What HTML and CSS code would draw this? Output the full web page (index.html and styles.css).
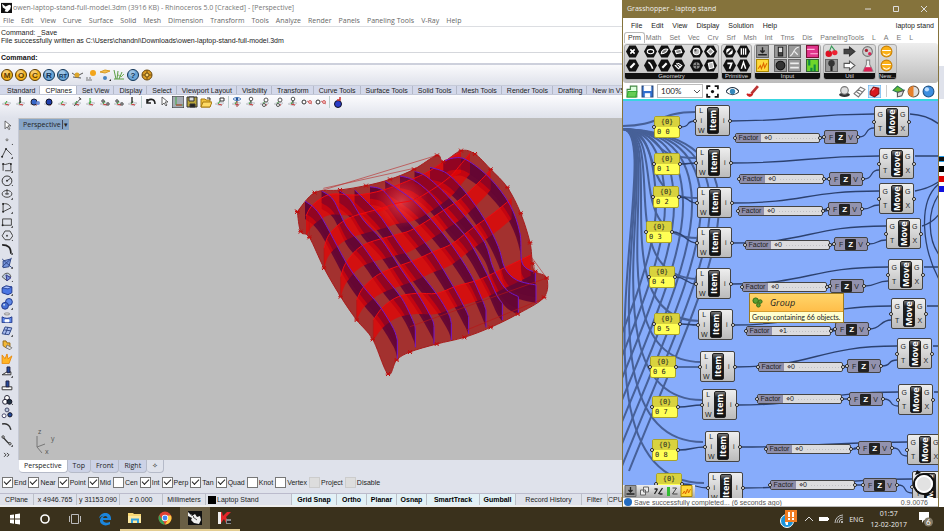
FILE: index.html
```html
<!DOCTYPE html>
<html lang="en">
<head>
<meta charset="utf-8">
<title>Rhinoceros and Grasshopper</title>
<link rel="stylesheet" href="styles.css">
</head>
<body>
<main class="desktop">
  <section class="rhino" aria-label="Rhinoceros">
    <header class="titlebar">
      <svg class="app-icon" viewBox="0 0 12 12"><path d="M0 1h12v11H0z" fill="#111"/><path d="M1 2l4 3 4-2 2 1-1 4-3 3-3-1 1-2-3-2z" fill="#fff"/></svg>
      <h1>owen-laptop-stand-full-model.3dm (3916 KB) - Rhinoceros 5.0 [Cracked] - [Perspective]</h1>
    </header>
    <nav class="menu">
      <a href="#">File</a><a href="#">Edit</a><a href="#">View</a><a href="#">Curve</a><a href="#">Surface</a><a href="#">Solid</a><a href="#">Mesh</a><a href="#">Dimension</a><a href="#">Transform</a><a href="#">Tools</a><a href="#">Analyze</a><a href="#">Render</a><a href="#">Panels</a><a href="#">Paneling Tools</a><a href="#">V-Ray</a><a href="#">Help</a>
    </nav>
    <div class="history"><p>Command: _Save</p><p>File successfully written as C:\Users\chandni\Downloads\owen-laptop-stand-full-model.3dm</p></div>
    <div class="prompt"><label for="cmd">Command:</label><input id="cmd" type="text"></div>
    <div class="toolbar vray" data-icons="gold-M gold-O gold-C blue-R blue-RT teapot sun lamp grass blue-? gear"></div>
    <nav class="tabs">
      <a href="#">Standard</a><a href="#" class="on">CPlanes</a><a href="#">Set View</a><a href="#">Display</a><a href="#">Select</a><a href="#">Viewport Layout</a><a href="#">Visibility</a><a href="#">Transform</a><a href="#">Curve Tools</a><a href="#">Surface Tools</a><a href="#">Solid Tools</a><a href="#">Mesh Tools</a><a href="#">Render Tools</a><a href="#">Drafting</a><a href="#">New in V5</a>
    </nav>
    <div class="toolbar cplanes" data-icons="plane axis planeball ball plane planepen axisg planedots planedots axis | undo cursor pressed save folder planebox | eye axisdot planedot planedot axisdot rings rings | ballred"></div>
    <div class="work">
      <div class="side" data-icons="cursor point polyline spline circle ellipse arc rect polygon fillet patch loft cube spheres cylinder mesh puzzle explode trim split group groupdots bend curve more"></div>
      <div class="viewport">
        <button class="view-name">Perspective <span>▾</span></button>
        <svg class="model" id="model" viewBox="0 0 840 720"></svg>
        <svg class="axes" viewBox="0 0 24 28"><path d="M4 9v11l8-3M4 20l5 6" fill="none" stroke="#777"/><text x="5" y="7">z</text><text x="18" y="14">y</text><text x="12" y="27">x</text></svg>
      </div>
    </div>
    <nav class="views"><a href="#" class="on">Perspective</a><a href="#">Top</a><a href="#">Front</a><a href="#">Right</a><a href="#" class="plus">✧</a></nav>
    <div class="osnap">
      <label><input type="checkbox" checked>End</label><label><input type="checkbox" checked>Near</label><label><input type="checkbox" checked>Point</label><label><input type="checkbox" checked>Mid</label><label><input type="checkbox">Cen</label><label><input type="checkbox" checked>Int</label><label><input type="checkbox" checked>Perp</label><label><input type="checkbox" checked>Tan</label><label><input type="checkbox" checked>Quad</label><label><input type="checkbox">Knot</label><label><input type="checkbox">Vertex</label><label><input type="checkbox" disabled>Project</label><label><input type="checkbox" disabled>Disable</label>
    </div>
    <div class="status">
      <span class="c34">CPlane</span><span class="c43">x 4946.765</span><span class="c43">y 31153.090</span><span class="c43">z 0.000</span><span class="c43">Millimeters</span><span class="layer">Laptop Stand</span><b class="c45">Grid Snap</b><b class="c30">Ortho</b><b class="c30">Planar</b><b class="c30">Osnap</b><b class="c53">SmartTrack</b><b class="c36">Gumball</b><span class="c66">Record History</span><span class="c26">Filter</span><span class="cpu">CPU</span>
    </div>
  </section>

  <section class="gh" aria-label="Grasshopper">
    <header class="gh-title">
      <h2>Grasshopper - laptop stand</h2>
      <button aria-label="Minimize"><svg viewBox="0 0 8 8"><path d="M1 4h6"/></svg></button>
      <button aria-label="Maximize"><svg viewBox="0 0 8 8"><path d="M1.500 1.500h5v5h-5z"/></svg></button>
      <button aria-label="Close"><svg viewBox="0 0 8 8"><path d="M1 1l6 6M7 1L1 7"/></svg></button>
    </header>
    <nav class="gh-menu"><a href="#">File</a><a href="#">Edit</a><a href="#">View</a><a href="#">Display</a><a href="#">Solution</a><a href="#">Help</a><span>laptop stand</span></nav>
    <nav class="gh-tabs"><a href="#" class="on">Prm</a><a href="#">Math</a><a href="#">Set</a><a href="#">Vec</a><a href="#">Crv</a><a href="#">Srf</a><a href="#">Msh</a><a href="#">Int</a><a href="#">Trns</a><a href="#">Dis</a><a href="#">PanelingTools</a><a href="#">L</a><a href="#">A</a><a href="#">E</a><a href="#">L</a></nav>
    <div class="ribbon">
      <div class="group"><div class="cells" data-icons="hex-x hex-pen . hex-oval hex-arc hex-leaf hex-pen hex-box hex-net . hex-ball hex-swirl hex-gem hex-page"></div><p>Geometry</p></div>
      <div class="group"><div class="cells" data-icons="hex-half hex-seven hex-one hex-a"></div><p>Primitive</p></div>
      <div class="group"><div class="cells" data-icons="g-down g-graph . g-switch g-dial g-curve g-list . g-pink g-green"></div><p>Input</p></div>
      <div class="group"><div class="cells" data-icons="cherry g-tree . arrowd arrowl . jar flask"></div><p>Util</p></div>
      <div class="group"><div class="cells" data-icons="smile smile"></div><p>New...</p></div>
    </div>
    <div class="gh-tools">
      <div class="set" data-icons="open disk"></div>
      <select aria-label="Zoom"><option>100%</option></select>
      <div class="set wide" data-icons="extent eyeblue brush"></div>
      <div class="set end" data-icons="shade wire redgem | leafgem orangeball bluesphere"></div>
    </div>
    <div class="canvas" id="canvas">
      <svg class="wires" id="wires"></svg>
      <div class="tip"><h3><svg viewBox="0 0 12 12"><g fill="#5a9f32" stroke="#2f6a14"><circle cx="4" cy="4" r="3"/><circle cx="9" cy="5" r="2"/><circle cx="7" cy="9" r="2"/></g></svg>Group</h3><p>Group containing 66 objects.</p></div>
      <div class="mini" data-icons="g-down stack nodes bars g-graph"></div>
      <svg class="compass" viewBox="0 0 24 26"><path d="M3 5l2-5 4 3z" fill="#111"/><circle cx="12" cy="14" r="10" fill="#ccc" stroke="#111" stroke-width="2"/><circle cx="12" cy="14" r="8" fill="#e2e2e2" stroke="#fff" stroke-width="2"/></svg>
    </div>
    <footer class="gh-status"><i></i><span>Save successfully completed... (6 seconds ago)</span><span>0.9.0076</span></footer>
  </section>
  <aside class="edge" aria-hidden="true"><i class="sky"></i><i class="ink"></i><i class="red"></i><i class="blue"></i></aside>
</main>

<footer class="taskbar">
  <button aria-label="Start"><svg viewBox="0 0 14 14"><path d="M2 3l4-.6v4.200H2zM7 2.300L12 1.600v5H7zM2 7.500h4v4.200l-4-.6zM7 7.500h5v5l-5-.7z" fill="#fff"/></svg></button>
  <button aria-label="Search"><svg viewBox="0 0 14 14"><circle cx="7" cy="7" r="4" fill="none" stroke="#fff" stroke-width="1.600"/></svg></button>
  <button aria-label="Task view"><svg viewBox="0 0 14 14"><path d="M3.500 2.500h7v9h-7zM1.500 4v6M12.500 4v6" fill="none" stroke="#bbb"/></svg></button>
  <button aria-label="Edge"><svg viewBox="0 0 14 14"><path d="M1 6.500C2 2.500 4.500 1 7.500 1c3.500 0 5.500 2.500 5.500 5.500V8H5c.3 3 4 3.500 7 1.800v2.500C7 15 1.500 12.500 2 8c.3-2 1.500-3.500 3.500-4.300C3.500 4 2 5 1 6.500zM5 6h4.500C9.300 3.200 5.500 3.300 5 6z" fill="#1b86dd"/></svg></button>
  <button class="open" aria-label="File Explorer"><svg viewBox="0 0 14 14"><path d="M0 2h5l1 1h7v9H0z" fill="#f7d774"/><path d="M0 5h13v7H0z" fill="#fde9a0"/><path d="M3 12V7.500h8V12H9V9.500H5V12z" fill="#36a3e0"/></svg></button>
  <button class="open" aria-label="Chrome"><svg viewBox="0 0 14 14"><circle cx="7" cy="7" r="6.500" fill="#e04133"/><path d="M1.300 4L4.500 9 7 13.500A6.500 6.500 0 011.300 4z" fill="#37a355"/><path d="M7 13.500L10 8.500 9.500 4.500h3.500A6.500 6.500 0 017 13.500z" fill="#fc4"/><circle cx="7" cy="7" r="3.200" fill="#fff"/><circle cx="7" cy="7" r="2.400" fill="#4285f4"/></svg></button>
  <button class="open on" aria-label="Rhinoceros"><svg viewBox="0 0 14 14"><path d="M0 0h14v14H0z" fill="#111"/><path d="M0 1l4 4 3-2 2 3 3-1 1 4-2 4-5-1-3-3 1-2-4-2z" fill="#eee"/><path d="M5 6l4 3M3 3l3 3" stroke="#555"/></svg></button>
  <button class="open" aria-label="Kaspersky"><svg viewBox="0 0 14 14"><path d="M0 1h3v12H0z" fill="#eee"/><path d="M3 1h1l1 4 4-4h4L8 6l3 6H8L6 8l-3 4z" fill="#e5262a"/><path d="M8 8h5v5H8z" fill="#888"/><path d="M9 10h4v2H9z" fill="#222"/></svg></button>
  <div class="tray">
    <svg class="call" viewBox="0 0 18 20"><circle cx="7" cy="12" r="6.500" fill="#1a94dc" stroke="#fff"/><path d="M5 1h12v12H5z" fill="#f07c22"/><path d="M8 3h2v5H8zM12 3h2v5h-2zM8 9h2v2H8zM12 9h2v2h-2zM5 13h3v3H6z" fill="#fff"/></svg>
    <svg viewBox="0 0 10 10"><path d="M1 7l4-4 4 4" fill="none" stroke="#ddd"/></svg>
    <svg viewBox="0 0 10 10"><path d="M0 3h9v4H0zM9 4h1v2H9z" fill="#fff"/></svg>
    <svg viewBox="0 0 10 10"><path d="M1 9a8 8 0 018-8M3 9a6 6 0 016-6M5 9a4 4 0 014-4" fill="none" stroke="#bbb"/><circle cx="8" cy="8" r="1" fill="#ddd"/></svg>
    <span>ENG</span>
    <time>01:57<br>12-02-2017</time>
    <svg class="note" viewBox="0 0 16 18"><path d="M1 2h10v8H6l-2 3v-3H1z" fill="#fff"/><circle cx="10.500" cy="12" r="4.500" fill="#837a66"/><text x="8" y="15">6</text></svg>
  </div>
</footer>
<script src="script.js"></script>
</body>
</html>
```

FILE: styles.css
```css
*, *::before, *::after { box-sizing: border-box; }
body, h1, h2, h3, p { margin: 0; font-weight: normal; font-size: inherit; }
body {
  height: 100vh;
  display: grid;
  grid-template-rows: minmax(0, 1fr) 24px;
  font: 7px/10px "Liberation Sans", Arial, sans-serif;
  color: #222;
  overflow: hidden;
  white-space: nowrap;
}
a { color: inherit; text-decoration: none; }
i { font-style: normal; }
button { border: 0; padding: 0; margin: 0; background: none; font: inherit; color: inherit; }
svg { display: block; }

.desktop { display: grid; grid-template-columns: 622fr 317fr 5fr; min-height: 0; }

/* Rhinoceros window */
.rhino { display: flex; flex-direction: column; min-width: 0; min-height: 0; overflow: hidden; background: #dfe2eb; }
.titlebar { display: flex; align-items: center; gap: 1px; height: 15px; background: #fff; color: #777; font: 7px/14px "Open Sans", sans-serif; }
.app-icon { width: 11px; height: 11px; margin-left: 1px; }
.menu { display: flex; gap: 7px; height: 12px; padding-left: 3px; background: #fff; color: #666; font: 7px/11px "Open Sans", sans-serif; border-bottom: 1px solid #dcdee2; }
.history { height: 26px; padding: 2px 1px; background: #fff; line-height: 8px; border-bottom: 1px solid #d5d7dc; }
.prompt { display: flex; height: 12px; padding: 0 1px; background: #fff; line-height: 10px; font-weight: bold; color: #111; border-bottom: 2px solid #cdd0dc; }
.prompt input { flex: 1; border: 0; padding: 0; background: none; font: inherit; outline: 0; }
.toolbar { display: flex; align-items: center; gap: 2px; padding-left: 1px; }
.toolbar svg, .side svg { width: 12px; height: 12px; flex: none; }
.toolbar .sep { width: 1px; height: 12px; background: #bcc; }
.vray { height: 20px; background: linear-gradient(#fafafc, #dfe2eb); }
.tabs { display: flex; height: 10px; padding-left: 2px; background: #d3d8ea; border-top: 1px solid #c5cad8; border-bottom: 1px solid #c3c8d8; line-height: 9px; }
.tabs a { padding: 0 4px 0 5px; border-right: 1px solid #b4b9c8; }
.tabs .on { background: #fff; }
.cplanes { height: 23px; padding-bottom: 9px; background: linear-gradient(#fcfcfe, #dfe2eb); }
.work { flex: 1; display: flex; min-height: 0; }
.side { width: 19px; padding: 2px 0 0 1px; display: flex; flex-direction: column; gap: 2px; background: #dfe2eb; border-right: 1px solid #c5c9d4; }
.side svg { flex: 0 1 12px; min-height: 0; }
.viewport { flex: 1; position: relative; background: #bdbdbd; overflow: hidden; }
.view-name { display: block; height: 11px; padding: 0 0 0 4px; background: #86a4c6; font: 7px/10px "Open Sans", sans-serif; margin-top: 1px; }
.view-name span { border-left: 1px solid #445; padding: 0 1px; }
.model { position: absolute; left: 261px; top: 22px; width: 280px; height: 240px; }
.axes { position: absolute; left: 14px; bottom: 5px; width: 24px; height: 28px; font: 7px "Open Sans", sans-serif; fill: #555; }
.views { display: flex; height: 13px; padding-left: 19px; font: 7px/12px "Open Sans", sans-serif; }
.views a { padding: 0 5px; background: #ccd2e6; border-right: 1px solid #b5bac8; border-bottom: 1px solid #b5bac8; border-radius: 0 0 4px 4px; }
.views .on { background: #fff; }
.views .plus { background: none; }
.osnap { display: flex; gap: 2px; align-items: center; height: 19px; padding-left: 2px; }
.osnap label { display: flex; align-items: center; gap: 1px; }
.osnap input { appearance: none; position: relative; width: 11px; height: 11px; margin: 0; background: #fff; border: 1px solid #777; }
.osnap input:checked::after { content: ""; position: absolute; left: 1px; top: 1px; width: 7px; height: 4px; border: solid #222; border-width: 0 0 1px 1px; rotate: -45deg; }
.osnap input:disabled { background: #ddd; border-color: #ccc; }
.status { display: flex; height: 14px; margin-top: 1px; border-top: 1px solid #bbc; border-bottom: 2px solid #eee; line-height: 11px; }
.status > * { flex: none; text-align: center; border-right: 1px solid #bcc0c8; }
.status b { background: #e2f1f6; color: #000; }
.c34 { width: 34px; } .c43 { width: 43px; } .c45 { width: 45px; } .c30 { width: 30px; } .c53 { width: 53px; } .c36 { width: 36px; } .c66 { width: 66px; } .c26 { width: 26px; }
.status .layer { width: 86px; display: flex; align-items: center; gap: 1px; }
.layer::before { content: ""; width: 8px; height: 8px; margin-left: 2px; background: #000; }
.status .cpu { border: 0; }

/* Grasshopper window */
.gh { display: flex; flex-direction: column; min-width: 0; min-height: 0; overflow: hidden; background: #fff; border: solid #85733c; border-width: 0 1px; }
.gh-title { display: flex; height: 18px; padding-left: 4px; background: #85733c; color: #eee; font: 7px/18px "Open Sans", sans-serif; }
.gh-title h2 { margin-right: auto; }
.gh-title button { width: 28px; display: grid; place-items: center; }
.gh-title svg { width: 8px; height: 8px; fill: none; stroke: #ddd; }
.gh-menu { display: flex; gap: 9px; height: 14px; padding: 0 4px 0 8px; line-height: 15px; }
.gh-menu span { margin-left: auto; }
.gh-tabs { display: flex; gap: 8px; height: 11px; padding-left: 1px; line-height: 11px; color: #777; }
.gh-tabs .on { padding: 0 3px; margin-right: -7px; color: #333; border: 1px solid #bbb; border-bottom: 0; border-radius: 3px 3px 0 0; line-height: 9px; }
.ribbon { display: flex; gap: 2px; height: 40px; padding: 1px 1px 2px; background: linear-gradient(#eee, #bcbcbc); border-radius: 3px; }
.group { height: 36px; background: linear-gradient(#ddd, #c4c4c4); border: 1px solid #aaa; border-radius: 3px; overflow: hidden; }
.group p { height: 6px; background: #111; color: #ddd; font-size: 6px; line-height: 6px; text-align: center; }
.cells { display: grid; grid-template-rows: 14px 14px; grid-auto-flow: column; grid-auto-columns: auto; column-gap: 1px; height: 28px; padding: 0 1px; }
.cells svg { width: 13px; height: 13px; }
.cells .gap { width: 3px; grid-row: span 2; }
.gh-tools { display: flex; align-items: center; gap: 3px; height: 18px; padding: 0 3px; border-bottom: 2px solid #38d5e0; }
.gh-tools select {
  appearance: none; width: 46px; height: 14px; padding: 0 3px; border: 1px solid #bbb; border-radius: 0; color: #222; font: 8px/12px Lato, sans-serif;
  background:
    linear-gradient(45deg, transparent 40%, #555 40% 60%, transparent 60%) 36px 5px / 3px 3px no-repeat,
    linear-gradient(-45deg, transparent 40%, #555 40% 60%, transparent 60%) 39px 5px / 3px 3px no-repeat,
    #fff;
}
.set { display: flex; gap: 2px; align-items: center; }
.set svg { width: 13px; height: 13px; }
.wide { gap: 7px; }
.end { margin-left: auto; }
.set .sep { width: 1px; height: 12px; background: #ccc; margin: 0 3px; }
.canvas { flex: 1; position: relative; min-height: 0; overflow: hidden; background: #87acfb; }
.wires { position: absolute; inset: 0; width: 100%; height: 100%; fill: none; stroke: #2c416f; }
.node { position: absolute; border: 1px solid #444; border-radius: 2px; color: #222; line-height: 9px; }
.node::before, .node::after { content: ""; position: absolute; top: 50%; width: 4px; height: 4px; margin-top: -2px; border: 1px solid #222; border-radius: 50%; background: #fff; }
.node::before { left: -3px; } .node::after { right: -3px; }
.panel { width: 26px; height: 22px; background: #ffff55; border-color: #a9a22b; font: 7px/10px "DejaVu Sans Mono", monospace; padding: 0 2px; }
.panel b { display: block; margin: 0 -2px; text-align: center; font-weight: normal; background: #d8d23e; }
.item, .move { display: grid; grid-template-columns: 1fr 12px 1fr; width: 35px; height: 31px; background: linear-gradient(#eee, #bbb); text-align: center; }
.item div, .move div { display: grid; align-content: space-around; }
.item b, .move b { margin: 1px 0; background: linear-gradient(#111, #222 80%, #777); border: 1px solid #222; border-radius: 2px; color: #fff; font: bold 9px/10px "Open Sans", sans-serif; writing-mode: vertical-rl; rotate: 180deg; text-align: center; }
.slider { width: 85px; height: 10px; display: flex; background: #dcdcde; line-height: 8px; }
.slider span { width: 25px; text-align: center; background: #8e8eaa; }
.slider em { font-style: normal; padding-left: 3px; background: repeating-linear-gradient(90deg, #c0c0c4 0 1px, transparent 1px 3px) 15px 4px / 40px 1px no-repeat; flex: 1; }
.num { width: 34px; height: 14px; display: flex; justify-content: space-between; align-items: center; padding: 0 4px; background: #9292ae; }
.num b { padding: 1px 3px; background: #222; color: #fff; border-radius: 1px; font-size: 8px; }
.tip { position: absolute; left: 126px; top: 192px; z-index: 2; width: 95px; height: 30px; background: #ffffcf; border: 1px solid #9b7a22; }
.tip h3 { height: 18px; display: flex; align-items: center; gap: 7px; padding-left: 2px; background: linear-gradient(#ffd56a, #ffbe4a); border-bottom: 1px solid #d69d2e; font: italic 9px/16px "Open Sans", sans-serif; }
.tip svg { width: 11px; height: 11px; }
.tip p { padding-left: 2px; font: 7px/10px Lato, sans-serif; }
.mini { position: absolute; left: 0; bottom: 0; z-index: 2; display: flex; gap: 1px; width: 72px; height: 13px; padding: 0 1px; background: linear-gradient(#eee, #aaa); }
.mini svg { width: 13px; height: 12px; }
.compass { position: absolute; right: 2px; bottom: 2px; z-index: 2; width: 24px; height: 26px; }
.gh-status { display: flex; gap: 2px; height: 9px; padding: 0 10px 0 1px; overflow: hidden; background: #fff; line-height: 9px; color: #555; border-bottom: 1px solid #bbb; }
.gh-status i { width: 8px; height: 8px; border-radius: 50%; background: #246cc0; }
.gh-status span:last-child { margin-left: auto; }

.edge { display: flex; flex-direction: column; gap: 4px; padding-top: 156px; background: linear-gradient(#fff 66px, #dfe2eb 66px 99px, #fff 99px); }
.edge i { height: 6px; }
.sky { background: #111; border: solid #249ce8; border-width: 1px 0; }
.ink { background: #000; } .red { background: #d00; } .blue { background: #11d; }

/* Taskbar */
.taskbar { display: flex; background: #3a311c; color: #eee; font: 7px/11px "Open Sans", sans-serif; }
.taskbar button { width: 30px; display: grid; place-items: center; border-bottom: 1px solid transparent; }
.taskbar button svg { width: 14px; height: 14px; }
.taskbar .open { border-bottom: 2px solid #e3cd92; background-clip: padding-box; }
.taskbar .on { background: #6a5f45; }
.tray { margin-left: auto; display: flex; align-items: center; gap: 5px; padding-right: 10px; }
.tray svg { width: 10px; height: 10px; }
.tray .call { width: 20px; height: 20px; }
.tray time { text-align: center; margin: 0 6px 0 2px; }
.tray .note { width: 16px; height: 18px; font: 8px Lato, sans-serif; fill: #fff; }
```

FILE: script.js
```js
const L = (d, c = '#444', w = 1, f = 'none') => `<path d="${d}" fill="${f}" stroke="${c}" stroke-width="${w}"/>`;
const C = (x, y, r, f, s = 'none') => `<circle cx="${x}" cy="${y}" r="${r}" fill="${f}" stroke="${s}"/>`;
const corner = '<path d="M12 10v2h-2z" fill="#222"/>';
const plane = L('M1 8l4-2 5 1-3 3z', '#c9ccd2', 1, '#dfe1e6') + L('M4 8l4 1', '#c33') + L('M4 8l2-3', '#3a3');
const badge = (t, a, b) => C(6, 6, 5.5, a, b) + C(5, 4, 3, '#ffffff55') + `<text x="6" y="9" text-anchor="middle" font-size="${t.length > 1 ? 6 : 8}" font-weight="bold" fill="${b}">${t}</text>`;
const hex = g => '<path d="M3 .500h6l3 5.500-3 5.500H3L0 6z" fill="#111"/>' + g;
const tile = g => '<path d="M.500.500h11v11H.500z" fill="#999" stroke="#666"/>' + g;
const W = '#fff';

const ICONS = {
  teapot: L('M1 4l3 2M8 6l4-2M2 8l8 1', '#555') + C(6, 6, 2.5, '#dba52a'),
  sun: C(8, 4, 3, '#f2a51c') + L('M1 9h2M4 9h2M1 11h6', '#777'),
  lamp: L('M1 3l5-2 5 1-5 2z', '#d99b25', 1, '#f5c04a') + C(6, 9, 2, '#4a84c0') + corner,
  grass: L('M1 1l2 9M5 2L4 10M9 3l-3 7M1 10h10', '#5b9f45') + L('M4 5l4 3 3-3', '#7bb35b'),
  gear: C(6, 6, 5, '#d99b25', '#6b4a10') + L('M6 1v10M1 6h10', '#7a5412') + C(6, 6, 2, '#f9d46b', '#6b4a10'),
  plane: plane,
  axis: plane + L('M5 7V1', '#333', 1.4),
  planeball: plane + C(5, 6, 3, '#3766c8', '#223') + C(9, 7, 2, '#6c8cd8'),
  ball: plane + C(6, 6, 3, '#1f3fae', '#112'),
  planepen: plane + L('M3 10l7-8M8 1l2 3', '#555'),
  axisg: plane + L('M5 8V2', '#3a3'),
  planedots: plane + C(4, 5, 1.2, W, '#333') + C(9, 8, 1.2, W, '#333'),
  planedot: plane + C(7, 4, 2, W, '#555') + C(5, 9, 1.5, W, '#555'),
  axisdot: plane + L('M6 8V4', '#555') + C(6, 3, 1.8, W, '#555'),
  undo: L('M3 3v4h4M3 7c1-5 8-5 8 1', '#222', 1.6),
  cursor: L('M4 1v8l2-2 2 3 1-1-2-3h3z', '#444', .8, W),
  pressed: '<path d="M0 0h12v12H0z" fill="#a5abb4" stroke="#333"/>' + L('M4 1v8h7', '#4a4') + L('M4 9h6', '#c33'),
  save: L('M1 1h10v10H1z', '#333', 1, '#b9a53a') + L('M3 1h5v4H3z', '#333', 1, '#ddd') + L('M4 8h5v3H4z', '#333', 1, '#222'),
  folder: L('M1 3h4l1 1h4v7H1z', '#a77a12', 1, '#f1c23b') + L('M3 6h9l-2 5H1z', '#a77a12', 1, '#ffdb65') + L('M7 2h3v2', '#333'),
  planebox: plane + L('M6 2h4v3H6z', '#333', 1, W),
  eye: plane + L('M2 3c2-2 6-2 8 0-2 2-6 2-8 0z', '#4477b8', 1, W) + C(6, 3, 1.3, '#23529a') + L('M6 5v6', '#a44'),
  rings: C(3, 6, 2, W, '#333') + L('M6 5l5 3', '#c77') + C(9, 6, 1.5, '#fbb', '#c66'),
  ballred: C(6, 8, 3.5, '#2a3cc8', '#112') + L('M5 4h3V1', '#c33', 1.5),
  point: C(6, 6, 1, W, '#666') + corner,
  polyline: L('M1 10L5 2l6 6') + C(5, 2, 1, '#222') + C(1, 10, 1, '#222') + corner,
  spline: L('M2 10V3c3 2 6-2 8 0v7H4') + C(2, 3, 1, '#222') + C(10, 3, 1, '#222') + corner,
  circle: C(6, 6, 5, 'none', '#333') + L('M6 6l4-3') + C(6, 6, 1, '#333') + corner,
  ellipse: '<ellipse cx="6" cy="6" rx="5" ry="3.500" fill="none" stroke="#444"/>' + L('M6 1v6M4 6h4') + corner,
  arc: L('M2 1v9l8-4C9 3 6 1 2 2') + C(2, 2, 1, '#222') + C(2, 10, 1, '#222') + corner,
  rect: L('M1.500 3h9v6.500h-9z') + C(1.500, 9.500, 1, '#222') + corner,
  polygon: L('M4 1h5l3 5-3 4H4L1 6z') + C(6, 6, 1, '#444') + corner,
  fillet: L('M1 2c6 0 9 2 9 9', '#222', 1.8) + corner,
  patch: L('M2 4l8-2-2 8-6 1zM1 2l10 9M1 10L11 1', '#334a88', 1, '#7594dc') + corner,
  loft: L('M1 6c3-5 8-5 9 0-3 0-4 1-4 4z', '#555', 1, '#bcd') + L('M5 4l5 3-4 3z', '#338', 1, '#7594dc') + corner,
  cube: L('M1 4l4-2 6 1v6l-4 2-6-2z', '#223a8c', 1, '#4a76e4') + L('M1 4l6 1 4-2-6-1z', '#223a8c', .8, '#a9c1ff') + corner,
  spheres: C(8, 4, 3.5, '#5f88e6', '#223a8c') + C(4, 8, 3.5, '#456fd4', '#223a8c') + C(3, 7, 1, '#cde') + corner,
  cylinder: '<ellipse cx="6" cy="2" rx="3" ry="1" fill="#fff" stroke="#888"/>' + L('M1 5c3 2 7 2 10 0v6H1z', '#223a8c', 1, '#5f88e6') + L('M4 8h4v2H4z', W, 1, W),
  mesh: L('M4 2l7 1-3 7-7-1zM7 2L4 10M3 5l7 1', '#334a88', 1, '#a9bdf0') + corner,
  puzzle: L('M2 2h3l1 2h3v4l-4 1-3-2z', '#976a11', 1, '#f3b836') + L('M6 6l5 3-2 2-4-2z', '#777', 1, '#ddd'),
  explode: L('M1 11V2l3 4 2-5 1 5 4-3-3 8z', '#e78b11', 1, '#ffb524'),
  trim: L('M1 9h9V6H6z', '#333', 1, W) + L('M6 1h3v6H6z', '#224', 1, '#234a9c') + corner,
  split: L('M1 7h10v3H1z', '#333', 1, W) + L('M5 1h3v6H5z', '#224', 1, '#234a9c'),
  group: C(6, 4, 2.5, W, '#223') + C(4, 8, 2.5, W, '#223') + C(8.500, 8, 2.5, '#234', '#112') + corner,
  groupdots: C(6, 3, 2, '#bcd', '#446') + C(3, 9, 2, W, '#446') + C(9, 8, 2.2, '#234a9c', '#112'),
  bend: L('M1 3c4-1 8 1 9 6', '#333', 1.5),
  curve: L('M1 2c4 2 4 6 8 7', '#333', 1.4) + C(2, 2, 1.2, W, '#333') + C(9, 9, 1.2, W, '#333') + corner,
  more: L('M3 4l2 2-2 2M6 4l2 2-2 2', '#333'),
  'hex-x': hex(L('M4 4l4 4M8 4l-4 4', W, 1.5)),
  'hex-pen': hex(L('M4 8l4-4', W, 2)),
  'hex-oval': hex('<ellipse cx="6" cy="6" rx="3" ry="2" fill="none" stroke="#fff"/>'),
  'hex-arc': hex(L('M4 3c2 1 3 3 4 6', W, 1.5)),
  'hex-leaf': hex(L('M3 8c0-3 3-5 6-4-1 3-3 4-6 4z', W, 1, '#777')),
  'hex-box': hex(L('M3 5l5-1 1 3-5 1z', W, 1, '#888')),
  'hex-net': hex(L('M3 6l3-2 3 2-3 3zM4 4l4 4', W)),
  'hex-ball': hex(C(6, 6, 3, '#bbb', W) + C(5, 5, 1, '#444')),
  'hex-swirl': hex(C(6, 6, 3, '#888') + L('M3 6h6M6 3v6', '#333')),
  'hex-gem': hex(L('M3 6l3-3 3 3-3 3z', W, 1, '#999')),
  'hex-page': hex(L('M4 4l4-1 1 5-4 1z', W, 1, '#bbb')),
  'hex-half': hex(C(6, 6, 3, W) + L('M4 8l4-4', '#111', 1.5)),
  'hex-seven': hex(L('M4 4h4L6 9', W, 1.5)),
  'hex-one': hex(L('M4 3v6M6 3v6M8 3v6', W, 1.2)),
  'hex-a': hex(L('M4 9l2-6 2 6', W, 1.3)),
  'g-down': tile(L('M6 2v4M4 5l2 2 2-2M2 9h8', '#222', 1.3)),
  'g-graph': '<path d="M.500.500h11v11H.500z" fill="#ffd83a" stroke="#a80"/>' + L('M2 9l2-3 1 3 2-5 1 4 2-4', '#d60'),
  'g-switch': tile(L('M4 2h4v8H4z', '#222', 1, '#444') + L('M5 3h2v3H5z', '#ddd', 1, '#ddd')),
  'g-dial': tile(C(6, 6, 4, '#333', '#111')),
  'g-curve': tile(L('M2 10c3 0 3-8 8-8M6 6l3 3', '#eee')),
  'g-list': tile(L('M2 4h8M2 8h8', '#eee', 1.5)),
  'g-pink': '<path d="M.500.500h11v11H.500z" fill="#e0348c" stroke="#713"/>' + L('M1 4h7M4 8h7', '#fbd'),
  'g-green': '<path d="M.500.500h11v11H.500z" fill="#6ed62a" stroke="#363"/>' + L('M3 1v5M8 5v6M5 8v3', '#184', 2),
  cherry: C(3.500, 8, 3, '#d12') + C(9, 7, 2.500, '#e23') + L('M4 6l2-5 3 4', '#395'),
  'g-tree': tile(L('M6 11V5', '#222', 2) + C(6, 4, 3, '#333')),
  arrowd: L('M1 4h5V2l5 4-5 4V8H1z', '#333', 1, '#444'),
  arrowl: L('M1 4h5V2l5 4-5 4V8H1z', '#555', 1, W),
  jar: C(6, 6, 4.500, '#ccc', '#777') + C(5, 5, 1.500, '#a23') + C(8, 8, 1.500, '#d25'),
  flask: L('M5 1h3v4l3 6H2l3-6z', '#888', 1, '#eee') + L('M4 8h5l1 3H3z', '#d25', 1, '#d25'),
  smile: C(6, 6, 5, '#fbb117', '#c98208') + L('M2 5h8M3 8c2 2 4 2 6 0', W),
  open: L('M1 4h3V1h6v10H1z', '#484', 1, '#dfd') + L('M2 6h8l-1 5H1z', '#3a3', 1, '#6c5'),
  disk: L('M1 1h10v10H1z', '#247', 1, '#2f6fd0') + L('M3 1h6v4H3zM4 8h4v3H4z', W, 1, W),
  extent: L('M1 4V1h3M8 1h3v3M11 8v3H8M4 11H1V8', '#111', 1.6) + C(6, 6, 1.5, '#111'),
  eyeblue: L('M0 6c3-5 9-5 12 0-3 4-9 4-12 0z', '#234', 1, W) + C(6, 6, 2.500, '#38b'),
  brush: L('M5 8l6-7', '#b33', 2.500) + L('M1 8c1 3 4 3 5 0', '#c22', 1.500, '#c22'),
  shade: '<ellipse cx="6" cy="9" rx="5" ry="2" fill="#333"/>' + C(6, 5, 3.500, '#ddd', '#777'),
  wire: L('M1 8l6-6 4 2-6 7zM3 6l4 3M5 4l4 3', '#777', 1, W),
  redgem: '<path d="M0 0h12v12H0z" fill="#cde6fb" stroke="#5aabec"/>' + L('M2 6l3-4 5 1v5l-4 3-4-2z', '#811', 1, '#d8191f') + L('M4 5l2-2', '#f99'),
  leafgem: L('M1 5l4-4 6 4-5 2z', '#275', 1, '#6b3') + L('M5 7l6-2-2 5-4 1z', '#555', 1, '#ddd'),
  orangeball: C(6, 6, 5, '#ddd', '#654') + '<path d="M6 1a5 5 0 000 10z" fill="#e6802a"/>',
  bluesphere: C(6, 6, 5, '#3d8fe0', '#258') + C(4.500, 4, 2, '#bdf'),
  stack: L('M2 5h5v5H2zM5 2h5v5H5z', '#666', 1, '#eee'),
  nodes: L('M2 9l3-5M6 9l4-6M2 4h3M7 9h3', '#222', 1.3),
  bars: L('M2 2v9', '#3b3', 3) + L('M6 3h4l-4 6h5', '#444'),
};

function icon(name) {
  if (name === '|') return '<span class="sep"></span>';
  if (name === '.') return '<span class="gap"></span>';
  const [kind, t] = name.split('-');
  const body = kind === 'gold' ? badge(t, '#f3b21d', '#5a3b05') : kind === 'blue' ? badge(t, '#6ba5d6', '#123455') : ICONS[name];
  return `<svg viewBox="0 0 12 12">${body}</svg>`;
}
document.querySelectorAll('[data-icons]').forEach(bar => {
  bar.innerHTML = bar.dataset.icons.split(' ').map(icon).join('');
});

/* Definition graph: positions of each row's nodes on the canvas.
   panel x,y / item x,y / slider x,y / number x,y / move x,y / slider value */
const ROWS = [
  [31, 15, 72, 4, 112, 32, 201, 29, 251, 5, 0],
  [31, 52, 73, 46, 116, 73, 206, 71, 256, 47, 0],
  [30, 85, 74, 86, 115, 105, 205, 101, 256, 82, 0],
  [23, 120, 74, 126, 122, 139, 211, 136, 263, 117, 0],
  [26, 165, 73, 167, 119, 181, 207, 178, 265, 158, 0],
  [31, 212, 75, 208, 123, 225, 212, 221, 268, 197, 1],
  [27, 255, 77, 250, 135, 261, 224, 258, 274, 237, 0],
  [29, 295, 79, 288, 134, 293, 226, 291, 275, 283, 0],
  [29, 338, 82, 330, 143, 343, 235, 340, 284, 333, 0],
  [33, 372, 85, 371, 147, 379, 240, 377, 289, 370, 0],
];
const node = (cls, x, y, html) => `<div class="node ${cls}" style="left:${x}px;top:${y}px">${html}</div>`;
const wire = (x1, y1, x2, y2, w = 1.3) => {
  const k = Math.max(10, Math.abs(x2 - x1) / 2);
  return `<path d="M${x1} ${y1}C${x1 + k} ${y1} ${x2 - k} ${y2} ${x2} ${y2}" stroke-width="${w}"/>`;
};
let nodes = '', wires = '';
ROWS.forEach(([px, py, ix, iy, sx, sy, nx, ny, mx, my, v], i) => {
  const label = i < 9 ? `0 ${i}` : '';
  nodes += node('panel', px, py, `<b>{0}</b>${label}`)
    + node('item', ix, iy, '<div><i>L</i><i>i</i><i>W</i></div><b>Item</b><div>i</div>')
    + node('slider', sx, sy, `<span>Factor</span><em>${v ? '&nbsp; ' : ''}⋄${v}</em>`)
    + node('num', nx, ny, 'F<b>Z</b>V')
    + node('move', mx, my, '<div><i>G</i><i>T</i></div><b>Move</b><div><i>G</i><i>X</i></div>');
  wires += wire(px + 27, py + 11, ix, iy + 16) + wire(ix + 35, iy + 16, mx, my + 8)
    + wire(sx + 86, sy + 5, nx, ny + 7) + wire(nx + 35, ny + 7, mx, my + 22);
});
/* list wires fanning out from the left edge */
let fan = wire(0, 25, 72, 11, 2);
for (let i = 0; i < 8; i++) {
  const x = 33 + i * 9;
  fan += `<path d="M0 28C${x * .6} 30 ${x - 2} ${46 + i} ${x} 100C${x + 2} 160 ${x - 42} 250 ${x - 90} 370"/>`;
}
[57, 97, 137, 178, 220, 261, 299, 341, 382].forEach((y, i) => {
  fan += `<path d="M0 28C45 32 ${22 - i * 11} ${y} ${73 + i} ${y}"/>`;
});
const tails = 'M287 13Q305 14 317 24M292 55H317M292 90Q305 88 317 80M299 125Q310 122 317 112M301 166H317M304 205H317M310 245H317M311 291H317M317 82C293 100 300 150 317 180M317 92C303 110 305 140 317 155';
document.getElementById('wires').innerHTML =
  `<g stroke-width="2" opacity=".7">${fan}</g>${wires}<path d="${tails}" stroke-width="1.300"/>`;
document.getElementById('canvas').insertAdjacentHTML('beforeend', nodes);

/* Waffle model: ribs as point lists, smoothed with Catmull-Rom segments */
function smooth(p, move = 'M') {
  let d = move + p[0];
  for (let i = 0; i < p.length - 1; i++) {
    const a = p[i - 1] || p[i], b = p[i], c = p[i + 1], e = p[i + 2] || c;
    d += `C${b[0] + (c[0] - a[0]) / 6} ${b[1] + (c[1] - a[1]) / 6} ${c[0] - (e[0] - b[0]) / 6} ${c[1] - (e[1] - b[1]) / 6} ${c}`;
  }
  return d;
}
const pts = s => s.split(' ').map(q => q.split(',').map(Number));
const strip = (p, h) => smooth(p) + smooth(p.map(([x, y]) => [x, y + h]).reverse(), 'L') + 'Z';
const OUTLINE = pts('52,215 104,158 180,150 258,137 330,118 402,88 471,46 490,65 543,32 585,42 632,88 682,142 722,220 750,308 757,370 766,395 800,414 792,472 713,522 632,562 553,592 470,612 390,636 350,660 324,702 278,598 230,540 182,470 132,384 88,292 62,275 52,215');
const RED = [
  '78,228 98,195 150,163 230,165 310,150 400,116 450,92 490,66 543,36',
  '132,325 150,280 205,235 300,206 350,190 400,180 455,150 510,110 545,70 570,40',
  '182,410 200,365 250,315 345,285 400,267 500,205 550,170 605,118 632,88',
  '230,480 252,440 305,398 400,362 460,335 515,312 570,270 640,220 695,175',
  '280,540 310,500 355,470 410,460 470,460 530,438 600,418 680,380 752,345',
].map(pts);
const BLUE = [
  '75,183 120,225 200,370 250,440 300,500 340,565 352,600',
  '125,153 160,180 200,260 250,320 305,398 365,475 400,545 406,570',
  '178,152 210,178 250,240 305,300 358,380 415,465 455,535 462,560',
  '224,150 265,190 305,235 355,310 410,385 470,462 505,520 514,550',
  '270,140 310,152 355,210 405,270 462,345 520,440 555,505 566,530',
  '316,124 350,145 400,182 455,240 515,315 570,400 605,475 618,510',
  '360,108 400,120 450,160 510,235 565,300 620,400 650,465 667,490',
  '404,94 440,110 500,165 560,235 615,310 640,385 675,445 715,470',
  '450,82 500,100 555,155 615,240 655,320 675,385 710,420 768,435',
  '490,65 520,54 560,60 630,115 690,195 720,280 727,370 766,398',
].map(pts);
const DROP = [60, 52, 52, 50, 52, 52, 50, 50, 54, 30];
const marks = OUTLINE.map(([x, y]) => `M${x - 6} ${y - 6}l12 12M${x + 6} ${y - 6}l-12 12M${x - 7} ${y}h14`).join('');
document.getElementById('model').innerHTML = `
  <clipPath id="body"><path d="${smooth(OUTLINE)}Z"/></clipPath>
  <path d="M104 158L471 46M52 215L104 158M130 145L402 85M585 42L722 220M640 110L750 308M757 355L800 414M722 220L766 395" stroke="#b33" fill="none" stroke-width="2"/>
  <path d="${smooth(OUTLINE)}Z" fill="#a3312f" stroke="#a81c1c" stroke-width="3"/>
  <g clip-path="url(#body)">
  ${BLUE.map(p => `<path d="${strip(p, 54)}" fill="#620434" opacity=".9"/>`).join('')}
  ${RED.map(p => `<path d="${strip(p, 62)}" fill="#e60404" opacity=".72"/>`).join('')}
  ${BLUE.map(p => `<path d="${strip(p, 36)}" fill="#620434" opacity=".5"/>`).join('')}
  <radialGradient id="shine"><stop offset="0" stop-color="#ff5a5a" stop-opacity=".6"/><stop offset="1" stop-color="#f33" stop-opacity="0"/></radialGradient>
  <circle cx="365" cy="185" r="80" fill="url(#shine)"/>
  </g>
  ${RED.map(p => `<path d="${smooth(p)}" fill="none" stroke="#f00a10" stroke-width="3"/>`).join('')}
  ${BLUE.map((p, i) => `<path d="${smooth(p)}v${DROP[i]}" fill="none" stroke="#7317cf" stroke-width="3"/>`).join('')}
  <path d="M88 235v57M132 325v59M182 410v60M230 480v60M280 540v58M790 476L560 570M800 414L390 560" stroke="#b81515" stroke-width="2" fill="none"/>
  <path d="${marks}" stroke="#c00c0c" stroke-width="3"/>`;
```
